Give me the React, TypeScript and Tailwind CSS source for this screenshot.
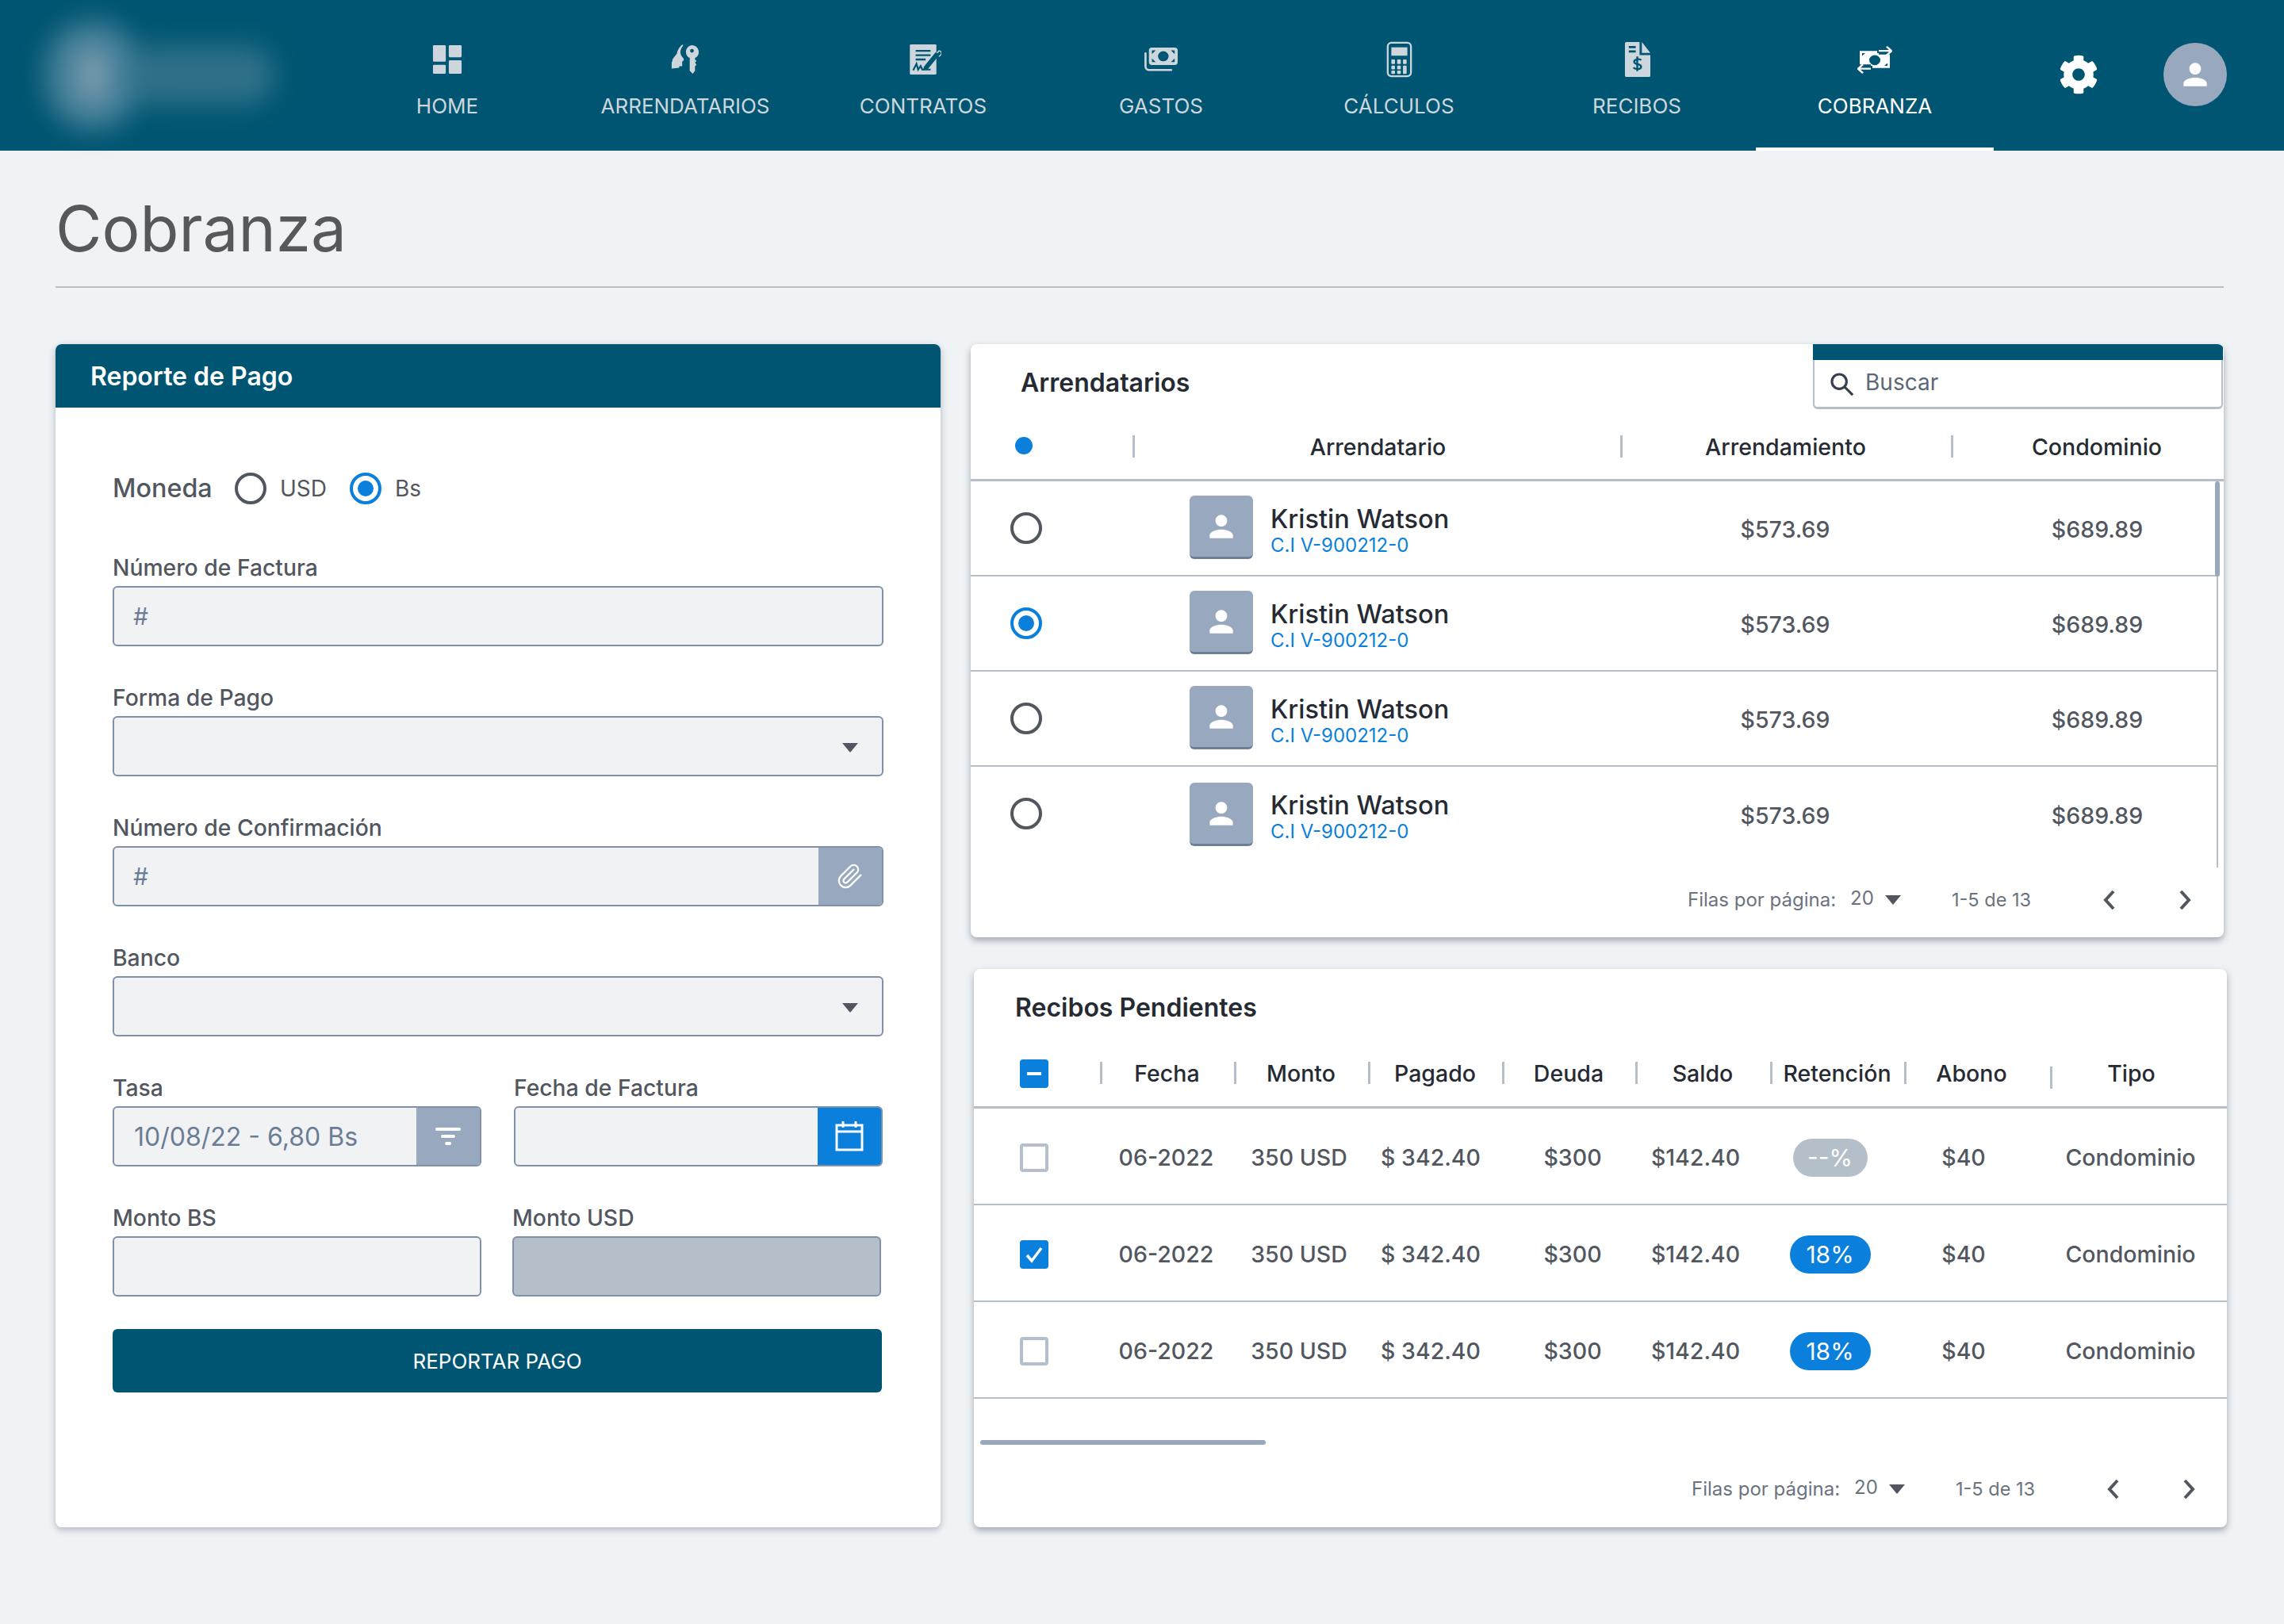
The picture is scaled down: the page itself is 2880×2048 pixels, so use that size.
import React from 'react';
import { FaCog } from 'react-icons/fa';

const NAVY = 'bg-[#005672]';

function HomeIcon() {
  return (
    <svg width="38" height="38" viewBox="0 0 40 40" fill="currentColor">
      <rect x="1" y="1" width="17" height="22" rx="1.5" />
      <rect x="22" y="1" width="17" height="16" rx="1.5" />
      <rect x="1" y="27" width="17" height="12" rx="1.5" />
      <rect x="22" y="21" width="17" height="18" rx="1.5" />
    </svg>
  );
}

function KeysIcon() {
  return (
    <svg width="38" height="38" viewBox="0 0 40 40" fill="currentColor">
      <path fillRule="evenodd" d="M29 1c5 0 9 4 9 9 0 4-2 7-5 8v2l2 2-2 2 2 3-2 2v6l-3 4-4-4V18c-3-1-5-4-5-8 0-5 4-9 8-9zm0 5a2 2 0 100 5 2 2 0 000-5z" />
      <path d="M17 2c-2 2-4 6-3 11 1 3 3 5 4 6v2l-2 2v6h-4v2l-10 1v-8l1-2v-2l6-8c1-5 4-10 8-12z" />
    </svg>
  );
}

function ContractIcon() {
  return (
    <svg width="46" height="40" viewBox="-3 0 44 44" preserveAspectRatio="none">
      <rect x="3" y="1" width="32" height="42" rx="1.5" fill="currentColor" />
      <path d="M10 10h18M10 16h18M10 22h12" stroke="#005672" strokeWidth="2.5" />
      <path d="M7 37l4-9 2 8 3-5 2 5h10" stroke="#005672" strokeWidth="2.2" fill="none" />
      <path d="M20 32l14-20 5 3-14 20-6 2z" fill="#005672" />
      <path d="M36 13l2-3c2 0 4 2 3 5l-3 3" stroke="currentColor" strokeWidth="1.5" fill="none" />
    </svg>
  );
}

function MoneyIcon() {
  return (
    <svg width="42" height="33" viewBox="0 0 44 36" preserveAspectRatio="none">
      <path fillRule="evenodd" fill="currentColor" d="M10 1h30a4 4 0 014 4v16a4 4 0 01-4 4H10a4 4 0 01-4-4V5a4 4 0 014-4zm15 5a7 7 0 100 14 7 7 0 000-14zM10 5v5l5-5h-5zm30 0h-5l5 5V5zM10 21h5l-5-5v5zm30 0v-5l-5 5h5z" />
      <path d="M1.5 9v18a5 5 0 005 5h29" stroke="currentColor" strokeWidth="2.8" fill="none" strokeLinecap="round" />
    </svg>
  );
}

function CalcIcon() {
  return (
    <svg width="33" height="46" viewBox="0 0 36 48" preserveAspectRatio="none" fill="currentColor">
      <rect x="2" y="2" width="32" height="44" rx="5" fill="none" stroke="currentColor" strokeWidth="2.5" />
      <rect x="7" y="8" width="22" height="11" />
      <rect x="7" y="24" width="5" height="6" rx="1" />
      <rect x="15" y="24" width="5" height="6" rx="1" />
      <rect x="23" y="24" width="5" height="6" rx="1" />
      <rect x="7" y="32" width="5" height="5" rx="1" />
      <rect x="15" y="32" width="5" height="5" rx="1" />
      <rect x="23" y="32" width="5" height="11" rx="1" />
      <rect x="7" y="38.5" width="5" height="4.5" rx="1" />
      <rect x="15" y="38.5" width="5" height="4.5" rx="1" />
    </svg>
  );
}

function ReceiptIcon() {
  return (
    <svg width="33" height="44" viewBox="0 0 34 48" preserveAspectRatio="none">
      <path fill="currentColor" d="M1 2a2 2 0 012-2h17v18h14v28a2 2 0 01-2 2H3a2 2 0 01-2-2z" />
      <path fill="currentColor" d="M23 0l11 15H23z" />
      <path d="M6 7h9M6 13h9" stroke="#005672" strokeWidth="3" />
      <path d="M22 25c-1-2-9-2-9 2 0 5 9 2 9 7 0 4-8 4-10 1M17 20v20" stroke="#005672" strokeWidth="2.5" fill="none" />
    </svg>
  );
}

function TransferIcon() {
  return (
    <svg width="44" height="36" viewBox="0 0 44 40" preserveAspectRatio="none">
      <path fillRule="evenodd" fill="currentColor" d="M3 8h24v5h14v19H17v-5H3zm19 6a7 7 0 100 14 7 7 0 000-14zM6 11v4l4-4zm32 18v-4l-4 4z" />
      <path d="M27 8h15M37 2l6 6-6 6" stroke="currentColor" strokeWidth="2.5" fill="none" />
      <path d="M17 33H2M7 27l-6 6 6 6" stroke="currentColor" strokeWidth="2.5" fill="none" />
      <path d="M26 5v6M18 29v6" stroke="#005672" strokeWidth="2" />
    </svg>
  );
}

function Person({ size }: { size: number }) {
  return (
    <svg width={size} height={size} viewBox="0 0 24 24" fill="#fff">
      <path d="M12 12c2.21 0 4-1.79 4-4s-1.79-4-4-4-4 1.79-4 4 1.79 4 4 4zm0 2c-2.67 0-8 1.34-8 4v2h16v-2c0-2.66-5.33-4-8-4z" />
    </svg>
  );
}

function Caret({ className = '' }: { className?: string }) {
  return (
    <svg width="20" height="12" viewBox="0 0 20 12" className={className} fill="#52575f">
      <path d="M0 0h20L10 12z" />
    </svg>
  );
}

function Chevron({ left }: { left?: boolean }) {
  return (
    <svg width="18" height="26" viewBox="0 0 18 26" fill="none" stroke="#52575f" strokeWidth="4">
      <path d={left ? 'M14 2L4 13l10 11' : 'M4 2l10 11L4 24'} />
    </svg>
  );
}

function Radio({ checked }: { checked?: boolean }) {
  return (
    <span
      className={`w-10 h-10 rounded-full border-[4px] flex items-center justify-center shrink-0 ${
        checked ? 'border-[#0a7fdc]' : 'border-[#52575f]'
      }`}
    >
      {checked && <span className="w-5 h-5 rounded-full bg-[#0a7fdc]" />}
    </span>
  );
}

function Label({ children }: { children: React.ReactNode }) {
  return <div className="h-8 mb-[7px] text-[28.3px] leading-8 font-medium text-[#52575f]">{children}</div>;
}

function Field({ children, className = 'bg-[#f1f2f4]' }: { children?: React.ReactNode; className?: string }) {
  return (
    <div className={`h-[76px] border-2 border-[#7e90aa] rounded-md flex items-center overflow-hidden ${className}`}>
      {children}
    </div>
  );
}

const navItems = [
  { label: 'HOME', icon: <HomeIcon /> },
  { label: 'ARRENDATARIOS', icon: <KeysIcon /> },
  { label: 'CONTRATOS', icon: <ContractIcon /> },
  { label: 'GASTOS', icon: <MoneyIcon /> },
  { label: 'CÁLCULOS', icon: <CalcIcon /> },
  { label: 'RECIBOS', icon: <ReceiptIcon /> },
  { label: 'COBRANZA', icon: <TransferIcon />, active: true },
];

function Header() {
  return (
    <header className={`h-[190px] ${NAVY} flex`}>
      <div className="w-[414px] shrink-0 flex items-center pl-[58px]">
        <div className="flex items-center blur-[16px]">
          <div className="w-[118px] h-[136px] rounded-full bg-[#47809a] flex items-center justify-center">
            <div className="w-9 h-16 rounded-full bg-[#7d9eae]" />
          </div>
          <div className="w-[186px] h-[74px] -ml-4 rounded-full bg-[#2f7089]" />
        </div>
      </div>
      {navItems.map((item) => (
        <div
          key={item.label}
          className={`w-[300px] flex flex-col items-center relative ${
            item.active ? 'text-white' : 'text-[#cdd6dc]'
          }`}
        >
          <div className="h-[48px] mt-[51px] flex items-center justify-center">{item.icon}</div>
          <div className="mt-[19px] text-[26px] leading-8">{item.label}</div>
          {item.active && <div className="absolute left-0 right-0 bottom-0 h-1 bg-white" />}
        </div>
      ))}
      <div className="w-[214px] flex items-center justify-center pb-[2px] text-white">
        <FaCog size={50} />
      </div>
      <div className="w-[80px] h-[80px] mt-[54px] rounded-full bg-[#98a9bf] flex items-center justify-center">
        <Person size={44} />
      </div>
    </header>
  );
}

function ReportCard() {
  return (
    <section className="w-[1116px] h-[1492px] bg-white rounded-lg shadow-[0_3px_8px_rgba(60,70,85,0.35)] overflow-hidden shrink-0">
      <div className={`h-20 ${NAVY} pl-11 pt-[2px] flex items-center text-[32px] font-semibold text-white`}>Reporte de Pago</div>
      <div className="pl-[72px] pr-[72px]">
        <div className="h-10 mt-[82px] flex items-center">
          <span className="text-[32.3px] font-medium text-[#52575f] w-[154px]">Moneda</span>
          <Radio />
          <span className="ml-[17px] text-[28px] text-[#52575f] w-[88px]">USD</span>
          <Radio checked />
          <span className="ml-[17px] text-[28px] text-[#52575f]">Bs</span>
        </div>
        <div className="mt-[64px]">
          <Label>Número de Factura</Label>
          <Field>
            <span className="pl-[24px] text-[30px] text-[#6b7d96]">#</span>
          </Field>
        </div>
        <div className="mt-[49px]">
          <Label>Forma de Pago</Label>
          <Field>
            <Caret className="ml-auto mr-[30px] mt-[3px]" />
          </Field>
        </div>
        <div className="mt-[49px]">
          <Label>Número de Confirmación</Label>
          <Field>
            <span className="pl-[24px] text-[30px] text-[#6b7d96]">#</span>
            <span className="ml-auto w-[80px] h-full bg-[#98a9bf] flex items-center justify-center">
              <svg width="34" height="34" viewBox="0 0 24 24" fill="none" stroke="#fff" strokeWidth="1.6" strokeLinecap="round" strokeLinejoin="round">
                <path d="M21.44 11.05l-9.19 9.19a6 6 0 01-8.49-8.49l8.57-8.57A4 4 0 1118 8.84l-8.59 8.57a2 2 0 01-2.83-2.83l8.49-8.48" />
              </svg>
            </span>
          </Field>
        </div>
        <div className="mt-[49px]">
          <Label>Banco</Label>
          <Field>
            <Caret className="ml-auto mr-[30px] mt-[3px]" />
          </Field>
        </div>
        <div className="mt-[49px] flex gap-[41px]">
          <div className="w-[465px]">
            <Label>Tasa</Label>
            <Field>
              <span className="pl-[25px] pt-[2px] text-[32px] text-[#6b7d96]">10/08/22 - 6,80 Bs</span>
              <span className="ml-auto w-[80px] h-full bg-[#98a9bf] flex items-center justify-center">
                <svg width="32" height="24" viewBox="0 0 32 24" fill="#fff">
                  <rect x="0" y="1" width="32" height="4" rx="2" />
                  <rect x="7" y="10" width="18" height="4" rx="2" />
                  <rect x="12" y="19" width="8" height="4" rx="2" />
                </svg>
              </span>
            </Field>
          </div>
          <div className="w-[465px]">
            <Label>Fecha de Factura</Label>
            <Field>
              <span className="ml-auto w-[80px] h-full bg-[#0a7fdc] flex items-center justify-center">
                <svg width="36" height="38" viewBox="0 0 36 38" fill="none" stroke="#fff" strokeWidth="3">
                  <rect x="2" y="5" width="32" height="31" />
                  <path d="M2 13h32M10 0v8M26 0v8" />
                </svg>
              </span>
            </Field>
          </div>
        </div>
        <div className="mt-[49px] flex gap-[39px]">
          <div className="w-[465px]">
            <Label>Monto BS</Label>
            <Field />
          </div>
          <div className="w-[465px]">
            <Label>Monto USD</Label>
            <Field className="bg-[#b5bfc9]" />
          </div>
        </div>
        <button className={`mt-[41px] w-[970px] h-20 rounded-md ${NAVY} text-white text-[26px]`}>REPORTAR PAGO</button>
      </div>
    </section>
  );
}

function Pagination() {
  return (
    <div className="flex items-center text-[#6b7280]">
      <span className="text-[24px] w-[205px]">Filas por página:</span>
      <span className="text-[24px] -mt-1 w-[44px]">20</span>
      <Caret />
      <span className="text-[23.5px] ml-[64px] w-[190px]">1-5 de 13</span>
      <Chevron left />
      <span className="w-[77px]" />
      <Chevron />
    </div>
  );
}

function TenantRow({ checked, last }: { checked?: boolean; last?: boolean }) {
  return (
    <div className={`grid grid-cols-[276px_610px_390px_295px] ${last ? 'h-[127px] items-start pt-[18px]' : 'h-[120px] items-center border-b-2 border-[#b5bfc9]'}`}>
      <div className={`pl-[50px] ${last ? 'pt-[21px]' : ''}`}>
        <Radio checked={checked} />
      </div>
      <div className={`flex items-center ${last ? 'pt-[2px]' : '-mt-[2px]'}`}>
        <div className="w-20 h-20 rounded-md bg-[#98a9bf] border-b-[3px] border-[#6e7f95] flex items-center justify-center">
          <Person size={44} />
        </div>
        <div className={`ml-[22px] ${last ? 'pt-[3px]' : 'pt-[5px]'}`}>
          <div className="text-[32.5px] leading-10 font-medium text-[#252a33]">Kristin Watson</div>
          <div className="text-[24px] leading-[26px] text-[#0a7fdc]">C.I V-900212-0</div>
        </div>
      </div>
      <div className={`text-center text-[28.5px] font-medium text-[#52575f] pr-[108px] ${last ? 'pt-[23px]' : 'pt-[5px]'}`}>$573.69</div>
      <div className={`text-center text-[28.5px] font-medium text-[#52575f] pr-[6px] ${last ? 'pt-[23px]' : 'pt-[5px]'}`}>$689.89</div>
    </div>
  );
}

function HeadSep({ low }: { low?: boolean }) {
  return <span className={`absolute left-0 w-[3px] h-7 bg-[#b5bfc9] ${low ? 'top-[9px]' : 'top-[3px]'}`} />;
}

function TenantsCard() {
  return (
    <section className="h-[748px] bg-white rounded-lg shadow-[0_4px_8px_rgba(60,70,85,0.45)] overflow-hidden">
      <div className="flex h-[81px]">
        <div className="pl-[63px] pt-[29px] text-[32px] leading-10 font-semibold text-[#252a33]">Arrendatarios</div>
        <div className="ml-auto w-[517px] mr-[1px] flex flex-col">
          <div className={`h-5 shrink-0 ${NAVY}`} />
          <div className="h-[62px] shrink-0 border-l-2 border-b-[3px] border-r-2 border-[#b5bfc9] rounded-b-md flex items-center pl-[17px]">
            <svg width="34" height="34" viewBox="0 0 24 24" fill="none" stroke="#36404d" strokeWidth="2.2">
              <circle cx="10" cy="10" r="6.5" />
              <path d="M15 15l7 7" />
            </svg>
            <span className="ml-[13px] -mt-[3px] text-[28px] text-[#5d6775]">Buscar</span>
          </div>
        </div>
      </div>
      <div className="h-[92px] border-b-[3px] border-[#b5bfc9] grid grid-cols-[204px_615px_417px_1fr] items-center text-[28.5px] font-medium text-[#252a33] pt-[8px]">
        <div className="pl-[56px]">
          <span className="block w-[22px] h-[22px] -mt-[3px] rounded-full bg-[#0a7fdc]" />
        </div>
        <div className="relative text-center h-9 leading-9 pl-[4px]">
          <HeadSep />
          Arrendatario
        </div>
        <div className="relative text-center h-9 leading-9">
          <HeadSep />
          Arrendamiento
        </div>
        <div className="relative text-center h-9 leading-9 pl-[24px]">
          <HeadSep />
          Condominio
        </div>
      </div>
      <div className="mr-[7px] border-r-[2px] border-[#b5bfc9] relative">
        <TenantRow />
        <TenantRow checked />
        <TenantRow />
        <TenantRow last />
        <span className="absolute top-0 right-[-4px] w-[6px] h-[120px] rounded-sm bg-[#98a9bf]" />
      </div>
      <div className="flex justify-end pr-[40px] pt-[23px]">
        <Pagination />
      </div>
    </section>
  );
}

const receiptCols = 'grid grid-cols-[159px_169px_169px_169px_168px_170px_169px_184px_223px]';

function ReceiptRow({ box, chip }: { box: 'empty' | 'checked'; chip: string }) {
  const muted = chip === '--%';
  return (
    <div className={`h-[122px] border-b-2 border-[#b5bfc9] pt-[4px] ${receiptCols} items-center text-[28.5px] font-medium text-[#52575f]`}>
      <div className="pl-[58px]">
        {box === 'checked' ? (
          <span className="w-9 h-9 rounded bg-[#0a7fdc] flex items-center justify-center">
            <svg width="24" height="24" viewBox="0 0 24 24" fill="none" stroke="#fff" strokeWidth="3.5">
              <path d="M3 13l6 7L21 4" />
            </svg>
          </span>
        ) : (
          <span className="block w-9 h-9 rounded border-[4px] border-[#b5bfc9]" />
        )}
      </div>
      <div className="text-center pr-[2px]">06-2022</div>
      <div className="text-center pr-[5px]">350 USD</div>
      <div className="text-center pr-[11px]">$ 342.40</div>
      <div className="text-center pl-[10px]">$300</div>
      <div className="text-center pr-[18px]">$142.40</div>
      <div className="flex justify-center pr-[18px]">
        <span className={`h-12 rounded-3xl flex items-center justify-center text-[30px] font-normal text-white ${muted ? 'w-[94px] bg-[#b5bfc9]' : 'w-[102px] bg-[#0a7fdc]'}`}>
          {chip}
        </span>
      </div>
      <div className="text-center pr-[34px]">$40</div>
      <div className="text-center pr-[20px] whitespace-nowrap">Condominio</div>
    </div>
  );
}

function ReceiptsCard() {
  const heads = ['Fecha', 'Monto', 'Pagado', 'Deuda', 'Saldo', 'Retención', 'Abono', 'Tipo'];
  return (
    <section className="w-[1580px] h-[704px] ml-[4px] bg-white rounded-lg shadow-[0_4px_8px_rgba(60,70,85,0.45)] overflow-hidden">
      <div className="pl-[52px] pt-[29px] h-[112px] text-[32px] leading-10 font-semibold text-[#252a33]">Recibos Pendientes</div>
      <div className={`h-[64px] border-b-[3px] border-[#b5bfc9] pb-[22px] ${receiptCols} items-center text-[28.5px] font-medium text-[#252a33]`}>
        <div className="pl-[58px]">
          <span className="w-9 h-9 rounded bg-[#0a7fdc] flex items-center justify-center">
            <span className="w-[18px] h-1 bg-white" />
          </span>
        </div>
        {heads.map((h, i) => (
          <div key={h} className={`relative text-center h-9 leading-9 ${i === 7 ? 'pr-[18px]' : i === 6 ? 'pr-[14px]' : ''}`}>
            <HeadSep low={i === 7} />
            {h}
          </div>
        ))}
      </div>
      <ReceiptRow box="empty" chip="--%" />
      <ReceiptRow box="checked" chip="18%" />
      <ReceiptRow box="empty" chip="18%" />
      <div className="h-[54px] pl-[8px] pt-[52px]">
        <div className="w-[360px] h-[6px] rounded-sm bg-[#98a9bf]" />
      </div>
      <div className="flex justify-end pr-[39px] pt-[42px]">
        <Pagination />
      </div>
    </section>
  );
}

export default function App() {
  return (
    <div className="w-[2880px] min-h-[2048px] bg-[#eff3f6] font-['Inter',sans-serif] overflow-hidden">
      <Header />
      <main className="pl-[70px] pr-[76px]">
        <div className="h-[173px] border-b-2 border-[#b5bfc9] pt-[48px]">
          <h1 className="text-[80px] leading-[100px] text-[#55585d]">Cobranza</h1>
        </div>
        <div className="mt-[71px] flex gap-[38px]">
          <ReportCard />
          <div className="w-[1580px] flex flex-col gap-[40px]">
            <TenantsCard />
            <ReceiptsCard />
          </div>
        </div>
      </main>
    </div>
  );
}
